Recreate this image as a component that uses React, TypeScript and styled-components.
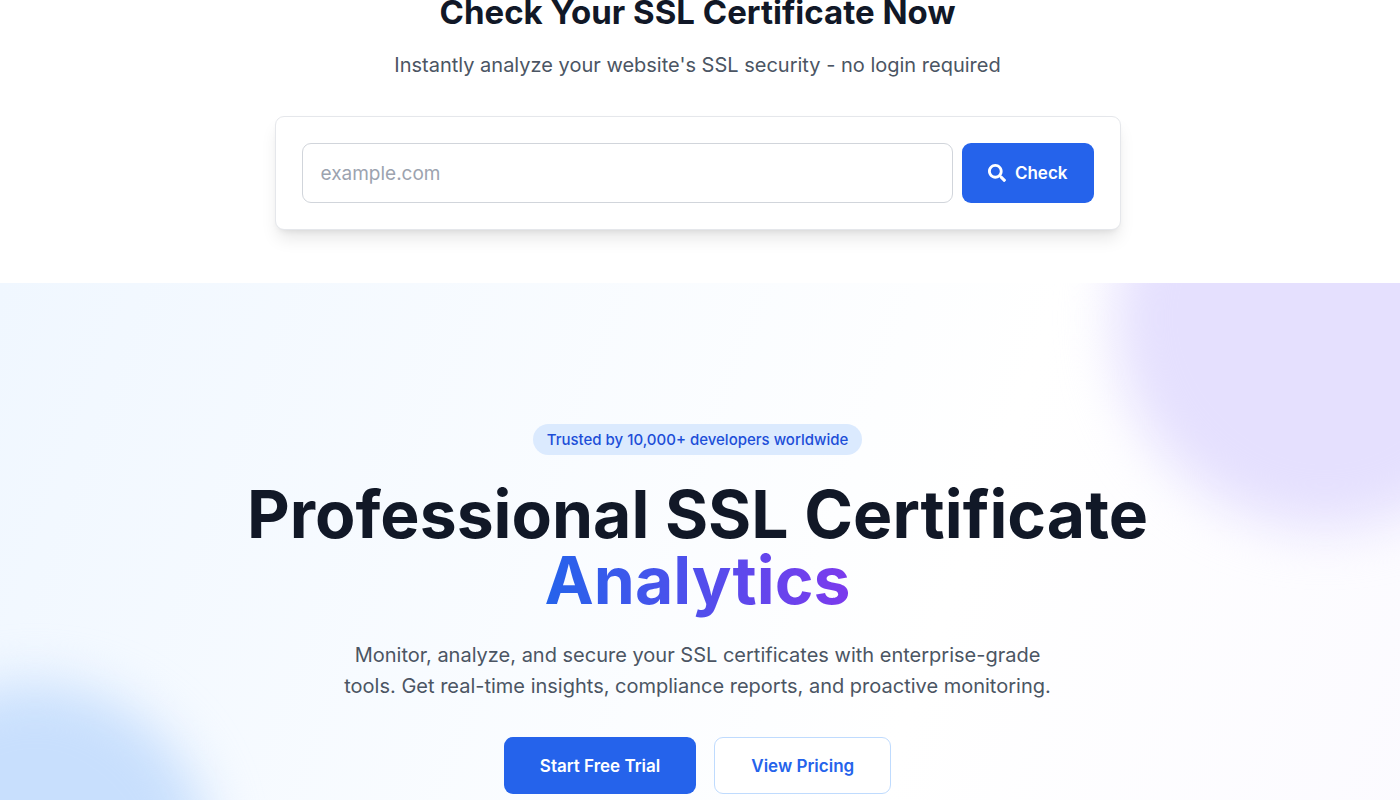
import React from "react";
import styled, { createGlobalStyle, css } from "styled-components";
import { FaSearch } from "react-icons/fa";

const GlobalStyle = createGlobalStyle`
  *, *::before, *::after { box-sizing: border-box; }
  body {
    margin: 0;
    background: #ffffff;
    color: #111827;
    font-family: Inter, "Liberation Sans", sans-serif;
    -webkit-font-smoothing: antialiased;
  }
  h1, h2, p { margin: 0; }
  button, input { font-family: inherit; }
`;

const Page = styled.main`
  overflow: hidden;
`;

const CheckSection = styled.section`
  display: flex;
  flex-direction: column;
  align-items: center;
  padding: 0 21px 53px 16px;
`;

const CheckTitle = styled.h2`
  font-size: 33px;
  line-height: 24px;
  font-weight: 700;
  text-align: center;
  margin-bottom: 26px;
`;

const Lead = styled.p`
  font-size: 20px;
  line-height: 31px;
  color: #4b5563;
  text-align: center;
  max-width: 740px;
  margin-bottom: 35px;
`;

const CheckForm = styled.form`
  display: flex;
  gap: 9px;
  width: 100%;
  max-width: 846px;
  padding: 26px;
  background: #ffffff;
  border: 1px solid #e5e7eb;
  border-radius: 9px;
  box-shadow: 0 11px 17px -3px rgba(0, 0, 0, 0.1), 0 4px 7px -4px rgba(0, 0, 0, 0.1);
`;

const DomainInput = styled.input`
  flex: 1;
  min-width: 0;
  height: 60px;
  padding: 0 18px;
  font-size: 19px;
  color: #111827;
  background: #ffffff;
  border: 1px solid #d1d5db;
  border-radius: 9px;
  &::placeholder { color: #9ca3af; opacity: 1; }
`;

const buttonBase = css`
  display: inline-flex;
  align-items: center;
  justify-content: center;
  font-size: 17px;
  line-height: 26px;
  font-weight: 600;
  border-radius: 9px;
  text-decoration: none;
  cursor: pointer;
`;

const CheckButton = styled.button`
  ${buttonBase}
  gap: 9px;
  padding: 0 26px;
  color: #ffffff;
  background: #2563eb;
  border: 0;
`;

const Hero = styled.section`
  position: relative;
  overflow: hidden;
  display: flex;
  flex-direction: column;
  align-items: center;
  padding: 141px 21px 141px 16px;
  background: linear-gradient(110deg, #f0f7ff, #ffffff 65%, #fbfaff);
`;

const Glow = styled.div<{ $tone: "purple" | "blue" }>`
  position: absolute;
  border-radius: 50%;
  filter: blur(26px);
  ${({ $tone }) =>
    $tone === "purple"
      ? css`
          top: -176px;
          right: -136px;
          width: 422px;
          height: 422px;
          background: #e5e0fe;
        `
      : css`
          bottom: -101px;
          left: -141px;
          width: 352px;
          height: 352px;
          background: #c8dffd;
        `}
`;

const HeroContent = styled.div`
  position: relative;
  display: flex;
  flex-direction: column;
  align-items: center;
`;

const Badge = styled.span`
  padding: 0 14px;
  font-size: 15px;
  line-height: 31px;
  font-weight: 500;
  color: #1d4ed8;
  background: #dbeafe;
  border-radius: 16px;
  margin-bottom: 26px;
`;

const HeroTitle = styled.h1`
  font-size: 66px;
  line-height: 66px;
  font-weight: 700;
  text-align: center;
  max-width: 986px;
  margin-bottom: 27px;
`;

const GradientWord = styled.span`
  color: transparent;
  background: linear-gradient(to right, #2563eb, #7c3aed);
  background-clip: text;
  -webkit-background-clip: text;
`;

const Actions = styled.div`
  display: flex;
  flex-wrap: wrap;
  justify-content: center;
  gap: 18px;
`;

const ActionLink = styled.a<{ $outline?: boolean }>`
  ${buttonBase}
  height: 57px;
  padding: 0 36px;
  color: ${({ $outline }) => ($outline ? "#2563eb" : "#ffffff")};
  background: ${({ $outline }) => ($outline ? "#ffffff" : "#2563eb")};
  border: ${({ $outline }) => ($outline ? "1px solid #bfdbfe" : "0")};
`;

export default function App() {
  return (
    <>
      <GlobalStyle />
      <Page>
        <CheckSection>
          <CheckTitle>Check Your SSL Certificate Now</CheckTitle>
          <Lead>Instantly analyze your website's SSL security - no login required</Lead>
          <CheckForm onSubmit={(event) => event.preventDefault()}>
            <DomainInput type="text" placeholder="example.com" aria-label="Domain" />
            <CheckButton type="submit">
              <FaSearch size={18} aria-hidden="true" />
              Check
            </CheckButton>
          </CheckForm>
        </CheckSection>
        <Hero>
          <Glow $tone="purple" />
          <Glow $tone="blue" />
          <HeroContent>
            <Badge>Trusted by 10,000+ developers worldwide</Badge>
            <HeroTitle>
              Professional SSL Certificate <GradientWord>Analytics</GradientWord>
            </HeroTitle>
            <Lead>
              Monitor, analyze, and secure your SSL certificates with enterprise-grade tools. Get
              real-time insights, compliance reports, and proactive monitoring.
            </Lead>
            <Actions>
              <ActionLink href="#trial">Start Free Trial</ActionLink>
              <ActionLink href="#pricing" $outline>
                View Pricing
              </ActionLink>
            </Actions>
          </HeroContent>
        </Hero>
      </Page>
    </>
  );
}
